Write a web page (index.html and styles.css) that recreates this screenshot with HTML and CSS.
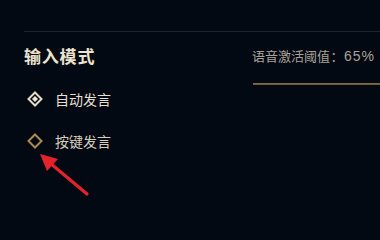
FILE: index.html
```html
<!DOCTYPE html>
<html lang="zh-CN">
<head>
<meta charset="utf-8">
<link rel="stylesheet" href="styles.css">
</head>
<body>
<div class="page">
  <div class="divider"></div>
  <div class="content">
    <div class="left">
      <div class="title">输入模式</div>
      <div class="options">
        <div class="option active">
          <svg class="radio" width="16" height="16" viewBox="0 0 16 16">
            <polygon points="8,1.5 14.5,8 8,14.5 1.5,8" fill="none" stroke="#e6dcc4" stroke-width="2"/>
            <polygon points="8,5 11,8 8,11 5,8" fill="#efe6d0"/>
          </svg>
          <span class="label">自动发言</span>
        </div>
        <div class="option">
          <svg class="radio" width="16" height="16" viewBox="0 0 16 16">
            <polygon points="8,1.5 14.5,8 8,14.5 1.5,8" fill="none" stroke="#a88a52" stroke-width="2"/>
          </svg>
          <span class="label">按键发言</span>
        </div>
      </div>
    </div>
    <div class="right">
      <div class="threshold">语音激活阈值<span class="colon">：</span><span class="value">65%</span></div>
      <div class="slider"></div>
    </div>
  </div>
  <svg class="arrow" width="380" height="237" viewBox="0 0 380 237">
    <line x1="87" y1="194" x2="50" y2="163" stroke="#e3232b" stroke-width="3.2" stroke-linecap="round"/>
    <polygon points="40,154 58,159 47,171" fill="#e3232b"/>
  </svg>
</div>
</body>
</html>
```
FILE: styles.css
```css
html, body {
  margin: 0;
  padding: 0;
  background: #020912;
}
body {
  font-family: "Noto Sans CJK SC", "Noto Sans", sans-serif;
  width: 380px;
  height: 237px;
  overflow: hidden;
}
.page {
  position: relative;
  width: 380px;
  height: 237px;
  padding: 31px 0 0 24px;
  box-sizing: border-box;
  overflow: hidden;
}
.divider {
  height: 1px;
  background: #1f252c;
}
.content {
  display: flex;
}
.left {
  width: 228px;
  padding-top: 12px;
}
.title {
  font-size: 17px;
  line-height: 24px;
  font-weight: 700;
  color: #ece3cf;
  letter-spacing: 0.8px;
}
.options {
  margin-top: 21px;
  display: flex;
  flex-direction: column;
  gap: 22px;
}
.option {
  display: flex;
  align-items: center;
  height: 20px;
}
.radio {
  margin-left: 3px;
  margin-right: 12px;
  display: block;
}
.label {
  font-size: 14px;
  line-height: 20px;
  color: #e6dfcf;
}
.option:not(.active) .label {
  color: #d6cfbf;
}
.right {
  flex: 1;
  min-width: 0;
  padding-top: 14px;
}
.threshold {
  font-size: 13px;
  line-height: 20px;
  color: #a8a398;
  white-space: nowrap;
}
.colon {
  display: inline-block;
  width: 14px;
  text-align: center;
}
.value {
  font-family: "Liberation Sans", "Noto Sans", sans-serif;
  font-size: 14px;
  letter-spacing: 1px;
}
.slider {
  margin-top: 17px;
  margin-left: 1px;
  height: 2px;
  background: linear-gradient(#8a7650, #5e5034);
}
.arrow {
  position: absolute;
  left: 0;
  top: 0;
  pointer-events: none;
}
```
